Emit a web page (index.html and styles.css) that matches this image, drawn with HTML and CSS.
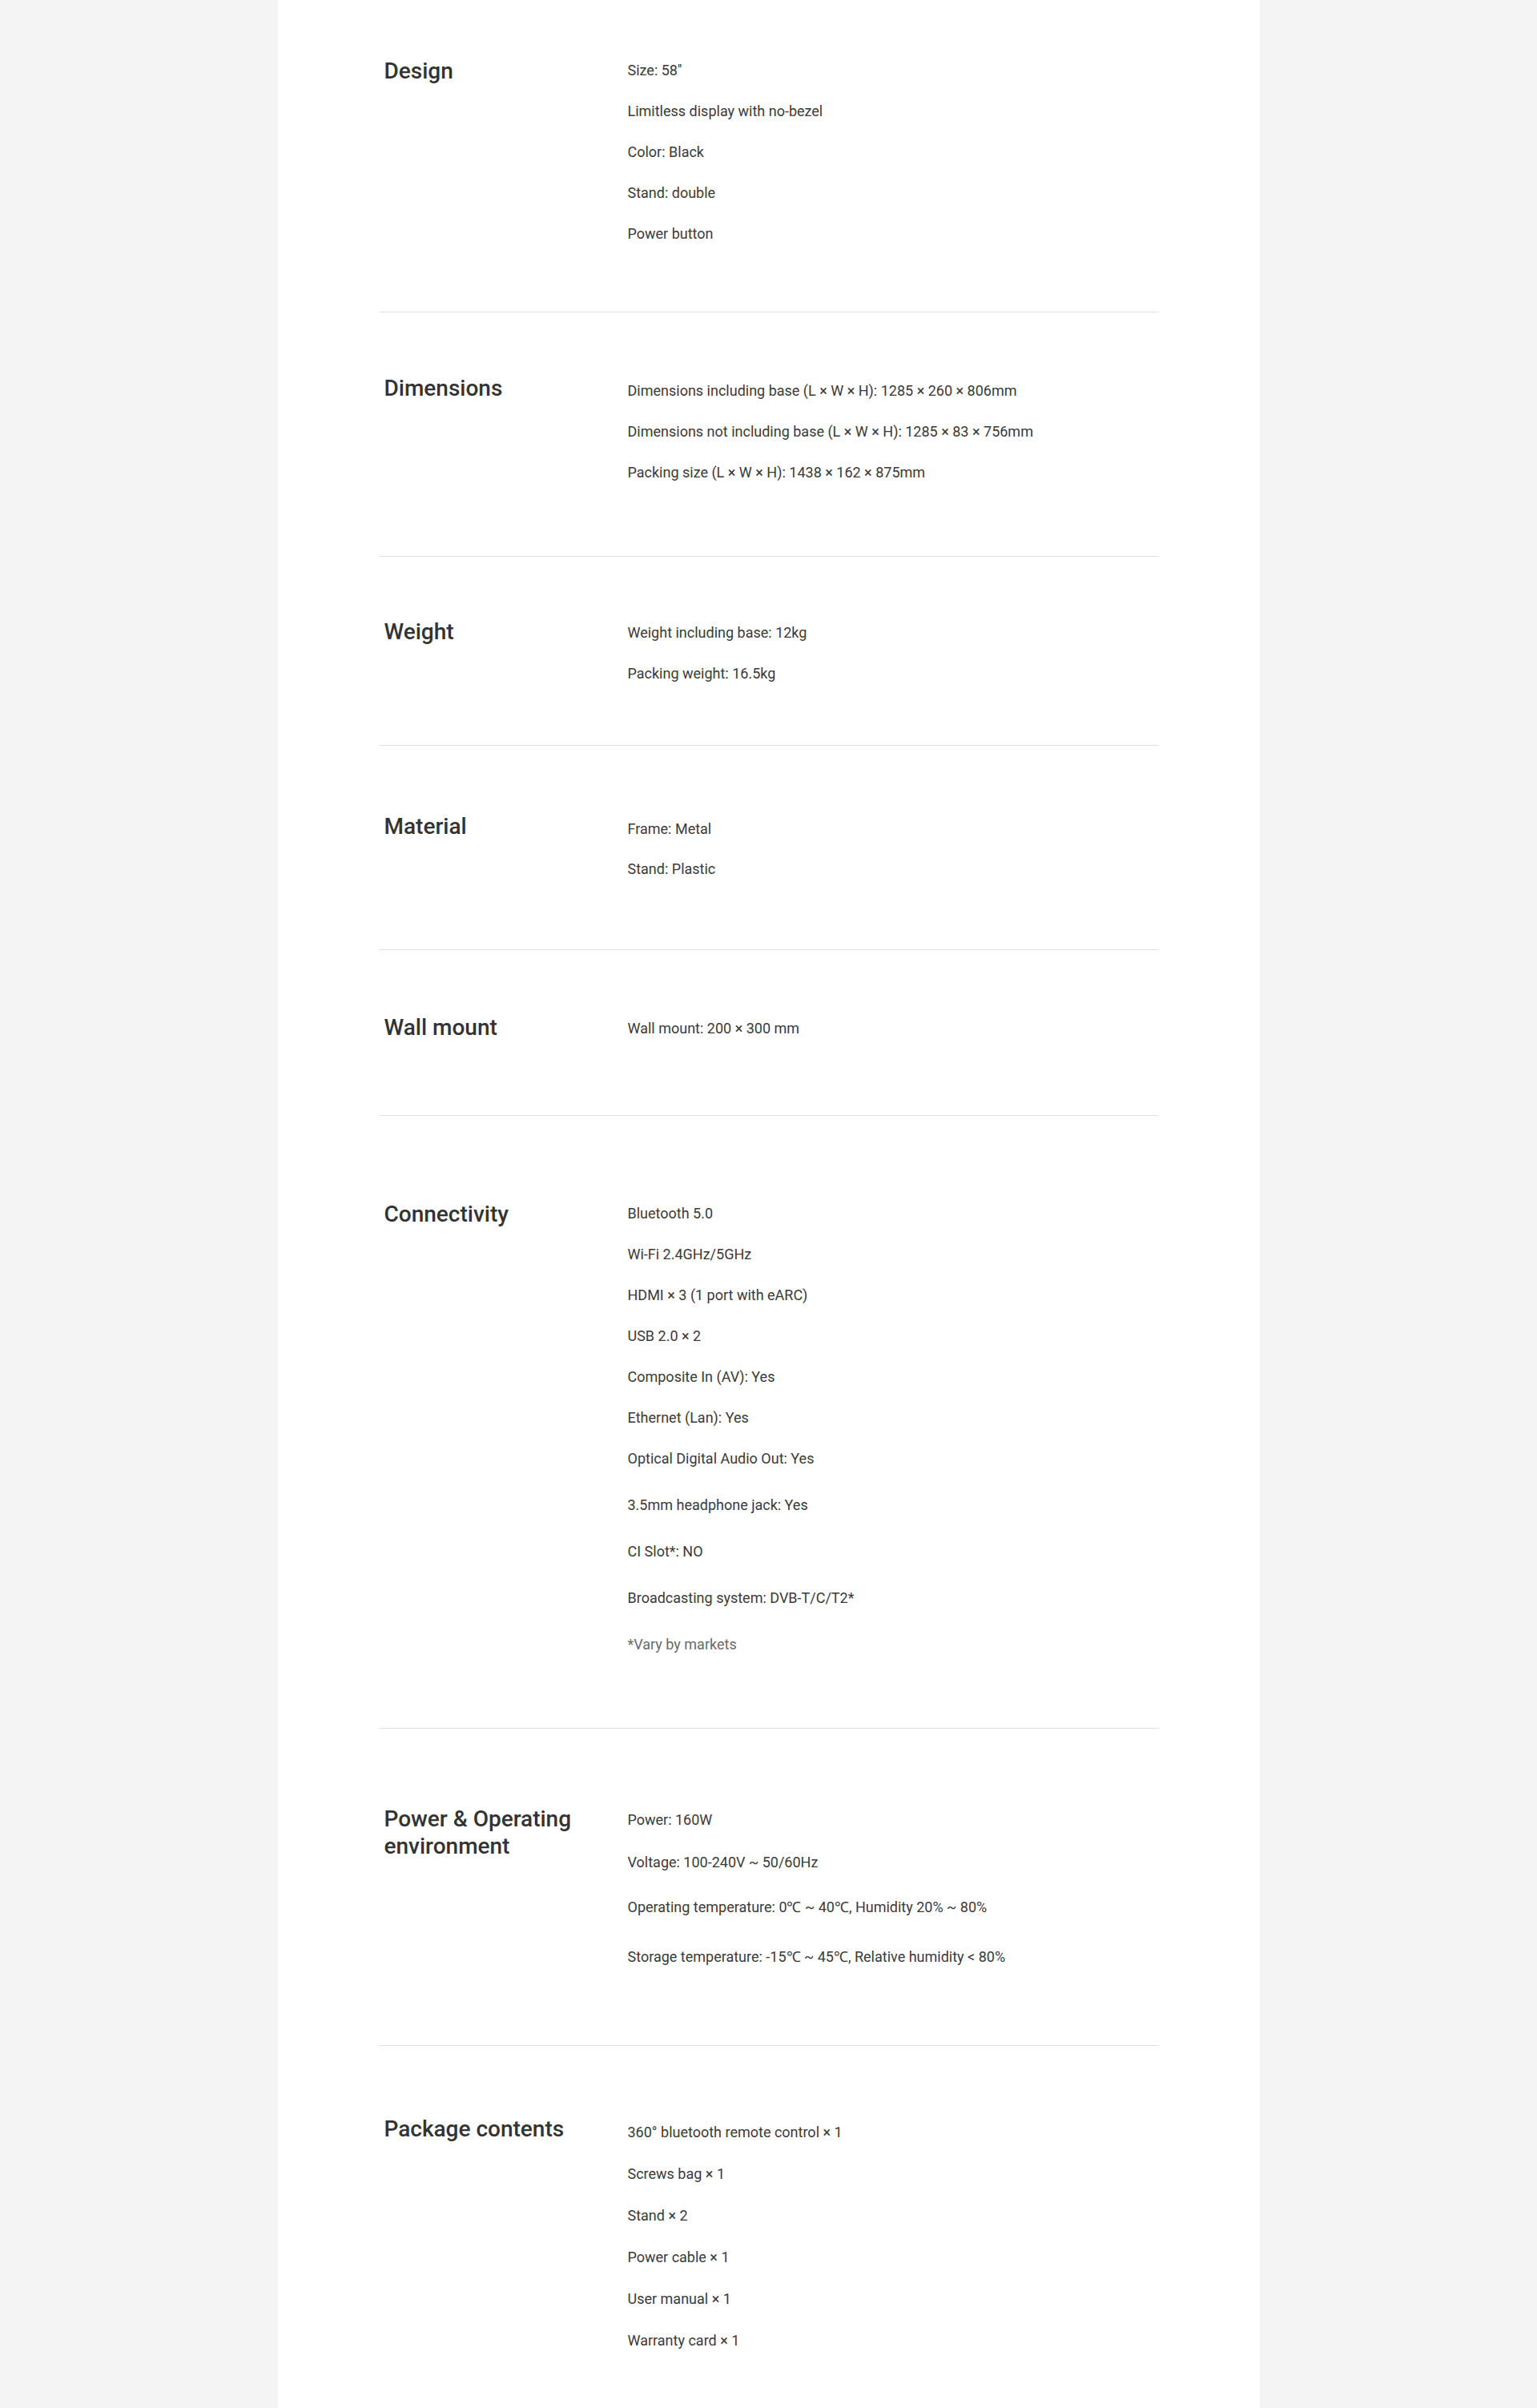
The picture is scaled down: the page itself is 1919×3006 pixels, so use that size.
FILE: index.html
```html
<!DOCTYPE html>
<html lang="en">
<head>
<meta charset="utf-8">
<title>Specifications</title>
<link rel="stylesheet" href="styles.css">
</head>
<body>
<main class="panel">
  <section class="spec spec--design">
    <h2 class="spec-title">Design</h2>
    <ul class="spec-values">
      <li>Size: 58''</li>
      <li>Limitless display with no-bezel</li>
      <li>Color: Black</li>
      <li>Stand: double</li>
      <li>Power button</li>
    </ul>
  </section>
  <section class="spec spec--dimensions">
    <h2 class="spec-title">Dimensions</h2>
    <ul class="spec-values">
      <li>Dimensions including base (L × W × H): 1285 × 260 × 806mm</li>
      <li>Dimensions not including base (L × W × H): 1285 × 83 × 756mm</li>
      <li>Packing size (L × W × H): 1438 × 162 × 875mm</li>
    </ul>
  </section>
  <section class="spec spec--weight">
    <h2 class="spec-title">Weight</h2>
    <ul class="spec-values">
      <li>Weight including base: 12kg</li>
      <li>Packing weight: 16.5kg</li>
    </ul>
  </section>
  <section class="spec spec--material">
    <h2 class="spec-title">Material</h2>
    <ul class="spec-values">
      <li>Frame: Metal</li>
      <li>Stand: Plastic</li>
    </ul>
  </section>
  <section class="spec spec--wall">
    <h2 class="spec-title">Wall mount</h2>
    <ul class="spec-values">
      <li>Wall mount: 200 × 300 mm</li>
    </ul>
  </section>
  <section class="spec spec--connectivity">
    <h2 class="spec-title">Connectivity</h2>
    <ul class="spec-values">
      <li>Bluetooth 5.0</li>
      <li>Wi-Fi 2.4GHz/5GHz</li>
      <li>HDMI × 3 (1 port with eARC)</li>
      <li>USB 2.0 × 2</li>
      <li>Composite In (AV): Yes</li>
      <li>Ethernet (Lan): Yes</li>
      <li>Optical Digital Audio Out: Yes</li>
      <li class="gap-lg">3.5mm headphone jack: Yes</li>
      <li class="gap-lg">CI Slot*: NO</li>
      <li class="gap-lg">Broadcasting system: DVB-T/C/T2*</li>
      <li class="gap-lg note">*Vary by markets</li>
    </ul>
  </section>
  <section class="spec spec--power">
    <h2 class="spec-title">Power &amp; Operating environment</h2>
    <ul class="spec-values">
      <li>Power: 160W</li>
      <li class="gap-md">Voltage: 100-240V ~ 50/60Hz</li>
      <li class="gap-lg">Operating temperature: 0℃ ~ 40℃, Humidity 20% ~ 80%</li>
      <li class="gap-xl">Storage temperature: -15℃ ~ 45℃, Relative humidity &lt; 80%</li>
    </ul>
  </section>
  <section class="spec spec--package">
    <h2 class="spec-title">Package contents</h2>
    <ul class="spec-values">
      <li>360° bluetooth remote control × 1</li>
      <li>Screws bag × 1</li>
      <li>Stand × 2</li>
      <li>Power cable × 1</li>
      <li>User manual × 1</li>
      <li>Warranty card × 1</li>
    </ul>
  </section>
</main>
</body>
</html>
```
FILE: styles.css
```css
html, body {
  margin: 0;
  padding: 0;
  background: #f4f4f4;
}

body {
  font-family: Roboto, "Liberation Sans", sans-serif;
  color: #333;
}

.panel {
  width: 1226px;
  min-height: 100vh;
  margin: 0 auto;
  padding: 0 127px;
  box-sizing: border-box;
  background: #fff;
}

.spec {
  display: flex;
  align-items: flex-start;
  border-bottom: 1px solid #e0e0e0;
}

.spec-title {
  flex: 0 0 305px;
  width: 305px;
  box-sizing: border-box;
  margin: 0;
  padding: 0 40px 0 6px;
  font-size: 28px;
  line-height: 34px;
  font-weight: 500;
  color: #333;
}

.spec-values {
  flex: 1;
  list-style: none;
  margin: 0;
  padding: 0 0 0 5px;
  font-size: 18px;
  line-height: 24px;
  color: #3a3a3a;
}

.spec-values li + li {
  margin-top: 27px;
}

.spec-values li.gap-md { margin-top: 29px; }
.spec-values li.gap-lg { margin-top: 34px; }
.spec-values li.gap-xl { margin-top: 38px; }

.spec-values .note {
  color: #6a6a6a;
}

.spec--design { padding: 72px 0 85px; }
.spec--design .spec-values { margin-top: 4px; }

.spec--dimensions { padding: 78px 0 92px; }
.spec--dimensions .spec-values { margin-top: 8px; }

.spec--weight { padding: 77px 0 77px; }
.spec--weight .spec-values { margin-top: 6px; }

.spec--material { padding: 84px 0 88px; }
.spec--material .spec-values { margin-top: 8px; }
.spec--material .spec-values li + li { margin-top: 26px; }

.spec--wall { padding: 80px 0 92px; }
.spec--wall .spec-values { margin-top: 6px; }

.spec--connectivity { padding: 106px 0 92px; }
.spec--connectivity .spec-values { margin-top: 4px; }

.spec--power { padding: 96px 0 98px; }
.spec--power .spec-values { margin-top: 6px; }
.spec--power .spec-values li.gap-lg { margin-top: 32px; }

.spec--package { padding: 87px 0 60px; border-bottom: 0; }
.spec--package .spec-values { margin-top: 9px; }
.spec--package .spec-values li + li { margin-top: 28px; }
```
